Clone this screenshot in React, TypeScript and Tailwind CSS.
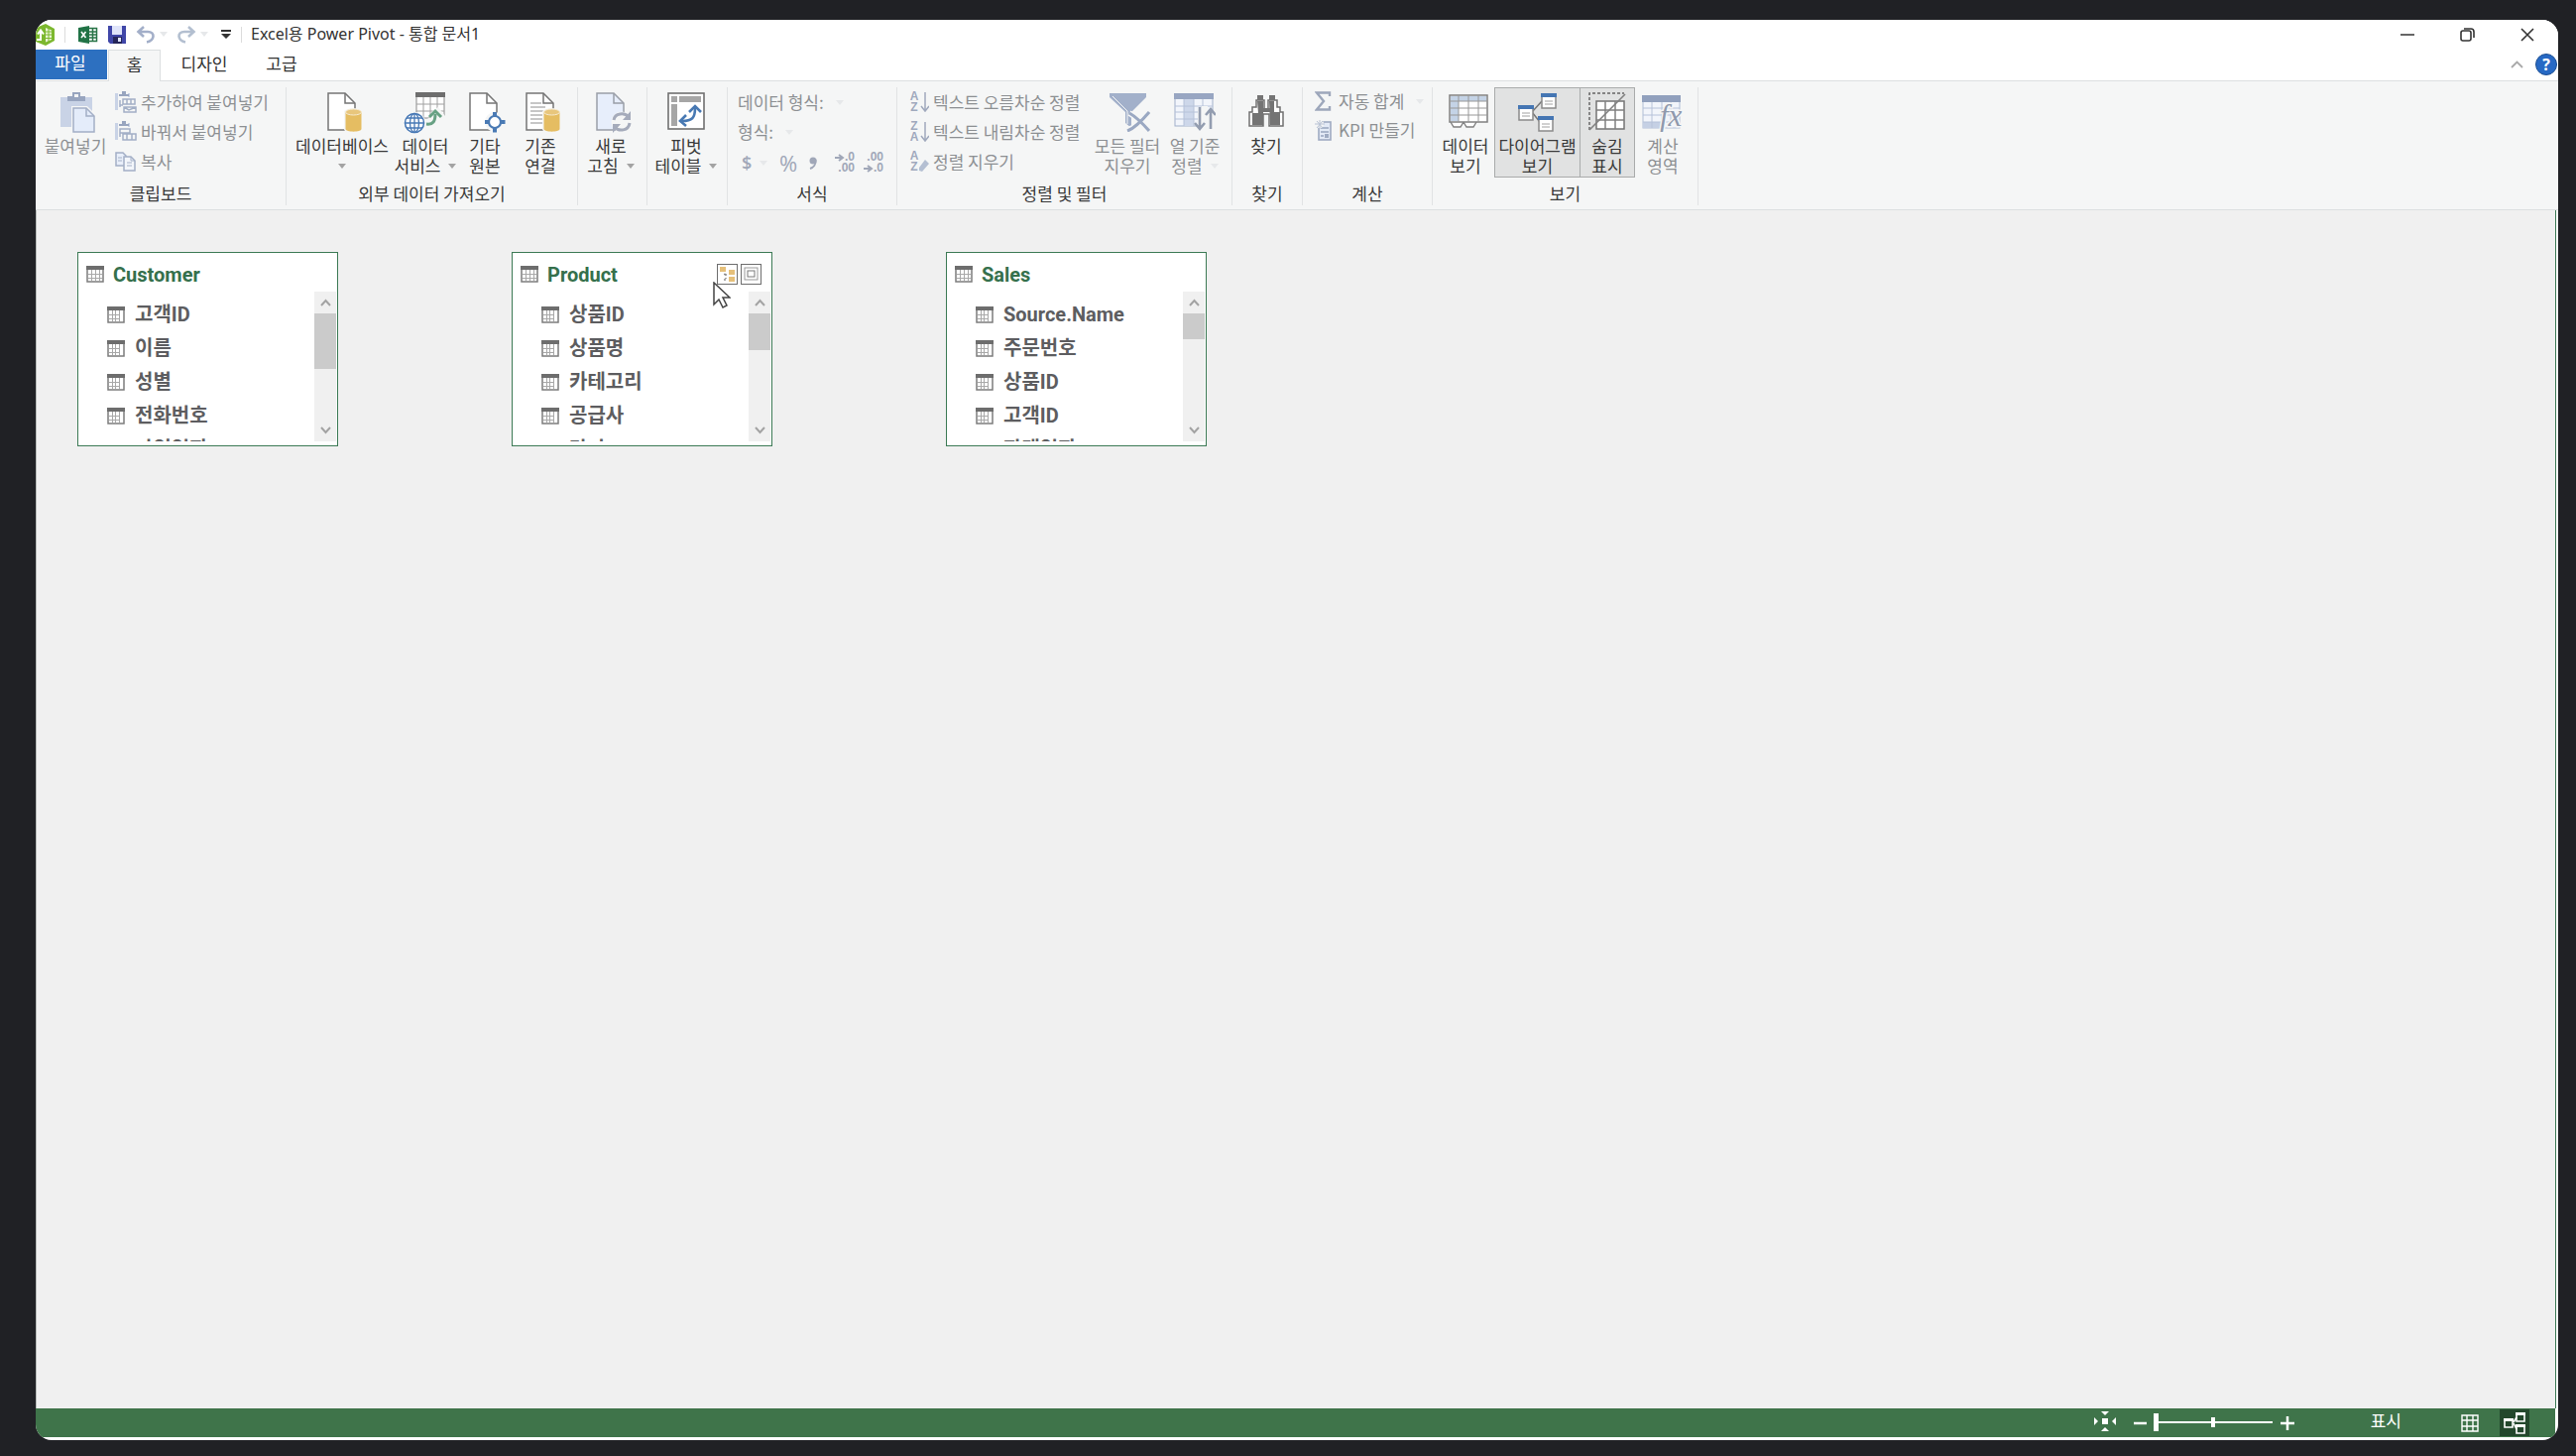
import React from 'react';
import clsx from 'clsx';

type IconProps = { w: number; h: number; children: React.ReactNode };

const Svg: React.FC<IconProps> = ({ w, h, children }) => (
  <svg width={w} height={h} viewBox={`0 0 ${w} ${h}`} fill="none" aria-hidden="true" className="shrink-0">
    {children}
  </svg>
);

/* Shared icon pieces */

const Page: React.FC<{ fill?: string; stroke?: string }> = ({ fill = '#fff', stroke = '#757575' }) => (
  <>
    <path d="M1 1H18L28 11V38H1Z" fill={fill} stroke={stroke} strokeWidth="1.5" />
    <path d="M18 1V11H28" stroke={stroke} strokeWidth="1.5" />
  </>
);

const Cylinder = () => (
  <>
    <path d="M17 20C17 15 36 15 36 20V37C36 42 17 42 17 37Z" fill="#f5f6f6" />
    <path d="M18.500 20V37C18.500 40.500 34.500 40.500 34.500 37V20Z" fill="#e5bd62" />
    <ellipse cx="26.500" cy="20" rx="8" ry="3" fill="#e8c67c" stroke="#f6ead0" />
  </>
);

/* Title bar icons */

const PivotLogo = () => (
  <Svg w={20} h={22}>
    <path d="M0 4L10 0L19 5V17L10 22L0 18Z" fill="#7cb82f" />
    <path d="M10 4L16 6.500V16L10 18.500Z" fill="#e9f5d6" />
    <path d="M10 11H17M13 4V18M10 8H17M10 14.500H17" stroke="#7cb82f" />
    <path d="M1 16H5V8M2 10.500L5 6.500L8 10.500" stroke="#fff" strokeWidth="2" />
  </Svg>
);

const ExcelLogo = () => (
  <Svg w={20} h={18}>
    <path d="M10 2.500H18.500V15.500H10" stroke="#2a7548" fill="#fff" strokeWidth="1.500" />
    <path d="M11 6H18M11 9H18M11 12H18M14.500 3V15" stroke="#2a7548" strokeWidth="1.500" />
    <path d="M0 2L11 0V18L0 16Z" fill="#217346" />
    <path d="M3 6L7.500 12M7.500 6L3 12" stroke="#fff" strokeWidth="1.600" />
  </Svg>
);

const SaveIcon = () => (
  <Svg w={20} h={18}>
    <path d="M1 0H19V18H3L1 16Z" fill="#4046a8" />
    <rect x="5" y="0" width="10" height="9" fill="#dfe4fa" />
    <rect x="6" y="11" width="9" height="7" fill="#25265a" />
    <rect x="11" y="12" width="3" height="4" fill="#dfe4fa" />
  </Svg>
);

const UndoIcon = () => (
  <Svg w={20} h={18}>
    <path d="M3 6H12C20 6 19 15 11 16.500M8 1L2.500 6L8 11" stroke="#a3afc9" strokeWidth="2.600" />
  </Svg>
);

const RedoIcon = () => (
  <Svg w={20} h={18}>
    <path d="M17 6H8C0 6 1 15 9 16.500M12 1L17.500 6L12 11" stroke="#b3bfd0" strokeWidth="2.600" />
  </Svg>
);

/* Ribbon icons */

const PasteIcon = () => (
  <Svg w={36} h={41}>
    <path d="M0 5H32V35H0Z" fill="#c9d3e6" />
    <path d="M7 4H12V0H20V4H25V9H7Z" fill="#98a5bf" />
    <rect x="14" y="2" width="4" height="3" fill="#f5f6f6" />
    <path d="M11 14H27L36 23V41H11Z" fill="#f5f6f6" />
    <path d="M13 16H26L34 24V40H13Z" fill="#e4ecfa" stroke="#a3afc6" strokeWidth="1.500" />
    <path d="M26 16V24H34" stroke="#a3afc6" strokeWidth="1.500" />
  </Svg>
);

const PasteSmallIcon: React.FC<{ replace?: boolean }> = ({ replace }) => (
  <Svg w={22} h={22}>
    <path d="M0 2H3V19H0ZM15 2H13V6H15Z" fill="#c9d3e6" />
    <path d="M4 5V3H7V0H11V3H14V5Z" fill="#98a5bf" />
    {replace ? (
      <path d="M5 8H15V12H5ZM5 12V16M8 13H21V19H8ZM12 13V19M17 13V19" stroke="#a3afc6" strokeWidth="1.500" />
    ) : (
      <path d="M8 8H20V13H8ZM12 8V13M16 8V13M5 14H8M9 16H21V21H9ZM9 16L14 19L21 16M5 9V16" stroke="#a3afc6" strokeWidth="1.500" />
    )}
  </Svg>
);

const CopyIcon = () => (
  <Svg w={22} h={20}>
    <path d="M1 1H8L11 4V14H1Z" fill="#e9effa" stroke="#a3afc6" strokeWidth="1.500" />
    <path d="M9 5H16L20 9V19H9Z" fill="#f3f6fb" stroke="#a3afc6" strokeWidth="1.500" />
    <path d="M3 6H7M3 9H7M12 11H17M12 14H17M16 5V9H20" stroke="#a3afc6" />
  </Svg>
);

const DatabaseIcon = () => (
  <Svg w={36} h={41}>
    <Page />
    <Cylinder />
  </Svg>
);

const DataServiceIcon = () => (
  <Svg w={44} h={42}>
    <rect x="13" y="1" width="28" height="25" fill="#fff" stroke="#8a8a8a" />
    <rect x="12" y="0" width="30" height="5" fill="#6e6e6e" />
    <path d="M13 12H41M13 19H41M20 5V26M27 5V26M34 5V26" stroke="#a0a0a0" />
    <path d="M0 31A11 11 0 1 1 22 31A11 11 0 1 1 0 31M22 38V28L29 24V19L35 15L42 24V27H38V31L32 38Z" fill="#f5f6f6" />
    <circle cx="11" cy="31" r="9.500" fill="#fff" stroke="#4778b5" strokeWidth="1.600" />
    <ellipse cx="11" cy="31" rx="4.500" ry="9.500" stroke="#4778b5" strokeWidth="1.300" />
    <path d="M2 31H20M3 26H19M3 36H19M11 21.500V40.500" stroke="#4778b5" strokeWidth="1.300" />
    <path d="M23 32C30 33 32 29 32 22" stroke="#68a184" strokeWidth="3" />
    <path d="M26 25L32 19L38 25" stroke="#68a184" strokeWidth="3" />
  </Svg>
);

const OtherSourceIcon = () => (
  <Svg w={37} h={41}>
    <Page />
    <circle cx="26" cy="30" r="10" fill="#f5f6f6" />
    <circle cx="26" cy="30" r="6" fill="#fff" stroke="#4a7ab4" strokeWidth="2.200" />
    <path d="M26 20V24M26 36V40.500M16 30H20M32 30H36.500" stroke="#4a7ab4" strokeWidth="4" />
  </Svg>
);

const ExistingIcon = () => (
  <Svg w={36} h={41}>
    <Page />
    <path d="M5 11H16M5 15H20M5 19H18M5 23H17M5 27H17M5 31H17" stroke="#8e8e8e" />
    <Cylinder />
  </Svg>
);

const RefreshIcon = () => (
  <Svg w={36} h={41}>
    <Page fill="#e7eefb" stroke="#9a9fa8" />
    <circle cx="26" cy="30" r="10.500" fill="#f5f6f6" />
    <path d="M18 28C19 21 29 20 33 25M34 31C33 39 23 40 19 35" stroke="#a5abbb" strokeWidth="3" />
    <path d="M35 19V28H27ZM17 41V32H25Z" fill="#a5abbb" />
  </Svg>
);

const PivotTableIcon = () => (
  <Svg w={38} h={41}>
    <rect x="1" y="1" width="36" height="36" fill="#fff" stroke="#707070" strokeWidth="1.600" />
    <path d="M4 4H10V10H4ZM12 4H34V10H12ZM4 12H10V34H4Z" fill="#a6a6a6" />
    <path d="M15 29C25 29 28 26 28 16" stroke="#4879b3" strokeWidth="2.600" />
    <path d="M22 20L28 14L34 20M19 23L13 29L19 34" stroke="#4879b3" strokeWidth="2.600" />
  </Svg>
);

const SortIcon: React.FC<{ top: string; bottom?: string }> = ({ top, bottom }) => (
  <span className="flex h-[22px] w-5 shrink-0 items-center text-[#a0a9bd]">
    <span className="flex w-[10px] flex-col text-center font-['Liberation_Sans'] text-[12px] font-bold leading-[11px]">
      <span>{top}</span>
      <span>{bottom ?? 'Z'}</span>
    </span>
    {bottom ? (
      <Svg w={10} h={22}>
        <path d="M6 1V19M2 15L6 20L10 15" stroke="#a0a9bd" strokeWidth="1.500" />
      </Svg>
    ) : (
      <Svg w={10} h={22}>
        <path d="M0 17L6 9L10 13L3 21L0 20Z" fill="#b4bfd2" />
      </Svg>
    )}
  </span>
);

const ClearFilterIcon = () => (
  <Svg w={41} h={40}>
    <path d="M0 1H37V5L22 20V36L16 31V20L0 5Z" fill="#a2b0ca" />
    <path d="M3 4L18 19V32" stroke="#f5f6f6" />
    <path d="M19 38C26 36 34 27 39 20M20 21C27 25 33 31 39 38" stroke="#f5f6f6" strokeWidth="6" />
    <path d="M18 39C26 36 34 27 40 20M20 21C27 25 33 31 40 39" stroke="#9aa8c2" strokeWidth="3" />
  </Svg>
);

const SortByColumnIcon = () => (
  <Svg w={42} h={40}>
    <rect x="1" y="2" width="38" height="32" fill="#f2f5fb" stroke="#a2b0ca" />
    <rect x="0" y="1" width="40" height="6" fill="#98a6c2" />
    <rect x="10" y="7" width="10" height="27" fill="#cdd7ea" />
    <path d="M1 14H39M1 20H39M1 27H39M10 7V34M20 7V34M29 7V34" stroke="#b6c2d9" />
    <path d="M24 17H28V14H34V20H42V40H24Z" fill="#f5f6f6" />
    <path d="M26 15V35M21 31L26 37L31 31M37 37V18M32 23L37 17L42 23" stroke="#939db0" strokeWidth="2.600" />
  </Svg>
);

const FindIcon = () => (
  <Svg w={36} h={40}>
    <path d="M8 8H16V18H20V8H29V15H32V20H35V34H21V22H15V34H1V20H4V15H8Z" fill="#fff" stroke="#707070" strokeWidth="1.500" />
    <path d="M9 9H15V33H4V21H10ZM21 9H26V20H32V33H22Z" fill="#747474" />
    <path d="M9 3H15V8H9ZM21 3H27V8H21ZM14 16H22V20H14Z" fill="#747474" />
  </Svg>
);

const SigmaIcon = () => (
  <Svg w={17} h={20}>
    <path d="M15 5V1.500H2L9 10L2 18.500H15V15" stroke="#9da7bb" strokeWidth="2.400" />
  </Svg>
);

const KpiIcon = () => (
  <Svg w={17} h={21}>
    <rect x="4" y="2" width="12" height="18" fill="#e3eaf6" stroke="#9fabc2" strokeWidth="1.600" />
    <path d="M6 8H14M6 12H14M6 16H9" stroke="#aab6cc" strokeWidth="2" />
    <rect x="10" y="14" width="4" height="4" fill="#9fabc2" />
    <circle cx="5" cy="4" r="4" fill="#f5f6f6" />
    <path d="M5 0V9M0 4H10M2 1L8 8M8 1L2 8" stroke="#b8c2d4" />
  </Svg>
);

const DataViewIcon = () => (
  <Svg w={40} h={40}>
    <path d="M2 30L5 35H12L15 30M15 30L18 35H25L28 30" fill="#fff" stroke="#808080" strokeWidth="1.400" />
    <rect x="1" y="3" width="38" height="27" fill="#fff" stroke="#808080" strokeWidth="1.500" />
    <path d="M2 4H38V9H2ZM2 9H10V29H2Z" fill="#c4d3e6" />
    <path d="M1 9H39M1 16H39M1 23H39M10 3V30M20 3V30M30 3V30" stroke="#979797" />
  </Svg>
);

const DiagramNode: React.FC<{ x: number; y: number }> = ({ x, y }) => (
  <>
    <rect x={x + 1} y={y + 1} width="14" height="14" fill="#fff" stroke="#8a8a8a" strokeWidth="1.500" />
    <rect x={x} y={y} width="16" height="4" fill="#4576b3" />
    <path d={`M${x + 4} ${y + 8}H${x + 12}M${x + 4} ${y + 11}H${x + 12}`} stroke="#a2a2a2" />
  </>
);

const DiagramIcon = () => (
  <Svg w={39} h={41}>
    <path d="M14 20L24 9M14 20L22 30" stroke="#777" strokeWidth="1.500" />
    <DiagramNode x={23} y={1} />
    <DiagramNode x={0} y={13} />
    <DiagramNode x={20} y={24} />
  </Svg>
);

const HiddenIcon = () => (
  <Svg w={38} h={40}>
    <path d="M1 38V1H36" stroke="#666" strokeWidth="1.500" strokeDasharray="3 2" />
    <rect x="8" y="9" width="28" height="28" fill="#fff" stroke="#747474" strokeWidth="1.500" />
    <path d="M8 18H36M8 28H36M17 9V37M27 9V37" stroke="#808080" strokeWidth="1.500" />
    <path d="M1 38L37 2" stroke="#808080" strokeWidth="1.600" />
  </Svg>
);

const CalcAreaIcon = () => (
  <Svg w={42} h={40}>
    <rect x="1" y="4" width="37" height="32" fill="#f2f5fb" stroke="#b0bdd6" />
    <rect x="0" y="3" width="39" height="7" fill="#91a0bd" />
    <path d="M1 30H20V36H1Z" fill="#c5d0e4" />
    <path d="M1 16H38M1 23H38M1 30H38M10 10V36M20 10V36M29 10V36" stroke="#b6c2d9" />
    <text x="18" y="34" fontSize="31" fontStyle="italic" fontFamily="Liberation Serif, serif" fill="#8f99ad" stroke="#f5f6f6" strokeWidth="3" paintOrder="stroke">fx</text>
  </Svg>
);

const TableIcon: React.FC<{ column?: boolean }> = ({ column }) => (
  <Svg w={18} h={17}>
    <rect x="1" y="1" width="16" height="15" fill="#fff" stroke="#7c7c7c" strokeWidth="1.500" />
    <rect x="0" y="0" width="18" height="4" fill="#6d6d6d" />
    {column ? (
      <path d="M2 8.500H12M2 12.500H12M5.500 4V15M8.500 4V15M12.500 4V15" stroke="#a8a8a8" />
    ) : (
      <path d="M2 8.500H16M2 12.500H16M5.500 4V15M9.500 4V15M13.500 4V15" stroke="#a8a8a8" />
    )}
  </Svg>
);

const Caret: React.FC<{ faint?: boolean }> = ({ faint }) => (
  <Svg w={8} h={5}>
    <path d="M0 0H8L4 5Z" fill={faint ? '#e6e8ea' : '#a3a3a3'} />
  </Svg>
);

/* Ribbon building blocks */

interface BigButtonProps {
  icon: React.ReactNode;
  lines: string[];
  width: string;
  menu?: 'inline' | 'below' | 'faint';
  indent?: boolean;
  disabled?: boolean;
  pressed?: boolean;
}

const BigButton: React.FC<BigButtonProps> = ({ icon, lines, width, menu, indent, disabled, pressed }) => (
  <button
    type="button"
    disabled={disabled}
    aria-pressed={pressed}
    className={clsx(
      'flex h-[91px] shrink-0 flex-col items-center border pt-1',
      width,
      disabled ? 'text-[#8d9093]' : 'text-[#3a3a3a]',
      pressed ? 'border-[#a9abab] bg-[#e1e2e2]' : 'border-transparent'
    )}
  >
    <span className={clsx('flex h-[44px] items-start', indent && 'pl-[5px]')}>{icon}</span>
    {lines.map((line, i) => (
      <span key={line} className="flex items-center gap-2 whitespace-nowrap leading-5">
        {line}
        {i === lines.length - 1 && (menu === 'inline' || menu === 'faint') && <Caret faint={menu === 'faint'} />}
      </span>
    ))}
    {menu === 'below' && <span className="flex h-5 items-center"><Caret /></span>}
  </button>
);

interface SmallButtonProps {
  icon?: React.ReactNode;
  label: string;
  menu?: boolean;
  compact?: boolean;
}

const SmallButton: React.FC<SmallButtonProps> = ({ icon, label, menu, compact }) => (
  <button
    type="button"
    disabled
    className={clsx('flex items-center gap-1 whitespace-nowrap text-[#8d9093]', compact ? 'h-7' : 'h-[30px]')}
  >
    {icon}
    {label}
    {menu && <span className="pl-2"><Caret faint /></span>}
  </button>
);

const Group: React.FC<{ label?: string; width: string; children: React.ReactNode }> = ({ label, width, children }) => (
  <section aria-label={label} className={clsx('flex shrink-0 flex-col border-r border-[#e1e3e4]', width)}>
    <div className="flex h-[95px]">{children}</div>
    <div className="text-center leading-6 text-[#3a3a3a]">{label}</div>
  </section>
);

const DecimalArrow = () => (
  <Svg w={10} h={8}>
    <path d="M0 4H8M4 1L8 4L4 7" stroke="#a0a7b8" strokeWidth="2" />
  </Svg>
);

const TitleBar = () => (
  <header className="flex h-[30px] shrink-0 items-center bg-white pb-px">
    <PivotLogo />
    <span className="ml-[9px] h-4 w-px bg-[#dcdcdc]" />
    <div className="ml-[13px] flex items-center gap-[9px]">
      <ExcelLogo />
      <button type="button" aria-label="저장"><SaveIcon /></button>
      <button type="button" aria-label="실행 취소" className="flex items-center gap-1"><UndoIcon /><Caret faint /></button>
      <button type="button" aria-label="다시 실행" className="flex items-center gap-1"><RedoIcon /><Caret faint /></button>
      <button type="button" aria-label="빠른 실행 도구 모음 사용자 지정" className="ml-1">
        <Svg w={10} h={10}>
          <path d="M0 0H10V2H0ZM0 4H10L5 9Z" fill="#333" />
        </Svg>
      </button>
    </div>
    <span className="ml-[10px] h-4 w-px bg-[#dcdcdc]" />
    <h1 className="ml-[9px] whitespace-nowrap pb-[2px] font-['Noto_Sans','Noto_Sans_CJK_KR',sans-serif] text-[16px] leading-5 text-[#333]">
      Excel용 Power Pivot - 통합 문서1
    </h1>
    <div className="ml-auto flex items-center gap-[46px] pr-6">
      <button type="button" aria-label="최소화">
        <Svg w={14} h={14}><path d="M0 7H14" stroke="#333" strokeWidth="1.600" /></Svg>
      </button>
      <button type="button" aria-label="이전 크기로 복원">
        <Svg w={15} h={14}>
          <rect x="1" y="3" width="10" height="10" rx="2" stroke="#333" strokeWidth="1.600" />
          <path d="M4 1H11Q14 1 14 4V10" stroke="#333" strokeWidth="1.600" />
        </Svg>
      </button>
      <button type="button" aria-label="닫기">
        <Svg w={14} h={14}><path d="M1 1L13 13M13 1L1 13" stroke="#333" strokeWidth="1.600" /></Svg>
      </button>
    </div>
  </header>
);

const Tabs = () => (
  <nav className="flex h-8 shrink-0 border-b border-[#dcdfe0] bg-white text-[#333]">
    <button type="button" className="h-[30px] w-[72px] bg-[#2d70c0] pb-1 pr-[2px] text-white">파일</button>
    <button type="button" aria-current="page" className="-mb-px ml-px w-[53px] border-x border-t border-[#dcdfe0] bg-[#f5f6f6] pb-1">홈</button>
    <button type="button" className="w-[88px] pb-1">디자인</button>
    <button type="button" className="w-[68px] pb-1">고급</button>
    <div className="ml-auto flex items-center gap-3 pb-px pr-px">
      <button type="button" aria-label="리본 메뉴 축소">
        <Svg w={13} h={8}><path d="M1 7L6.500 1.500L12 7" stroke="#a8a8a8" strokeWidth="1.800" /></Svg>
      </button>
      <button
        type="button"
        aria-label="도움말"
        className="flex size-[22px] items-center justify-center rounded-full border border-[#1d4f92] bg-[#2769c4] font-['Open_Sans',sans-serif] text-[16px] font-bold leading-none text-white"
      >
        ?
      </button>
    </div>
  </nav>
);

const Ribbon = () => (
  <div className="flex h-[130px] shrink-0 border-b border-[#dcdfe0] bg-[#f5f6f6] pb-1 pt-[6px]">
    <Group label="클립보드" width="w-[253px]">
      <BigButton icon={<PasteIcon />} lines={['붙여넣기']} width="ml-1 w-[72px]" indent disabled />
      <div className="ml-1 flex flex-col">
        <SmallButton icon={<PasteSmallIcon />} label="추가하여 붙여넣기" />
        <SmallButton icon={<PasteSmallIcon replace />} label="바꿔서 붙여넣기" />
        <SmallButton icon={<CopyIcon />} label="복사" />
      </div>
    </Group>
    <Group label="외부 데이터 가져오기" width="w-[294px]">
      <BigButton icon={<DatabaseIcon />} lines={['데이터베이스']} width="ml-1 w-[104px]" menu="below" indent />
      <BigButton icon={<DataServiceIcon />} lines={['데이터', '서비스']} width="w-[64px]" menu="inline" />
      <BigButton icon={<OtherSourceIcon />} lines={['기타', '원본']} width="w-[56px]" indent />
      <BigButton icon={<ExistingIcon />} lines={['기존', '연결']} width="w-[56px]" indent />
    </Group>
    <Group width="w-[70px]">
      <BigButton icon={<RefreshIcon />} lines={['새로', '고침']} width="w-[66px]" menu="inline" indent />
    </Group>
    <Group width="w-[81px]">
      <BigButton icon={<PivotTableIcon />} lines={['피벗', '테이블']} width="w-[78px]" menu="inline" />
    </Group>
    <Group label="서식" width="w-[171px]">
      <div className="flex flex-col pl-[10px]">
        <SmallButton label="데이터 형식:" menu />
        <SmallButton label="형식:" menu />
        <div className="flex h-8 items-center text-[#a0a7b8]">
          <button type="button" disabled className="flex w-[38px] items-center gap-2 pl-1 font-['Open_Sans',sans-serif] text-[18px] font-semibold">$<Caret faint /></button>
          <button type="button" disabled className="w-[26px] font-['Open_Sans',sans-serif] text-[22px] leading-none">%</button>
          <button type="button" disabled aria-label="쉼표 스타일" className="w-6 pl-2">
            <Svg w={10} h={13}>
              <circle cx="4" cy="4" r="3.500" fill="#a0a7b8" />
              <path d="M6.500 3C7.500 8 4 11 1 12" stroke="#a0a7b8" strokeWidth="2" />
            </Svg>
          </button>
          <button type="button" disabled className="ml-[10px] flex flex-col items-end font-['Liberation_Sans',sans-serif] text-[12px] font-bold leading-[11px]">
            <span className="flex items-center"><DecimalArrow />.0</span>
            <span>.00</span>
          </button>
          <button type="button" disabled className="ml-[9px] flex flex-col items-end font-['Liberation_Sans',sans-serif] text-[12px] font-bold leading-[11px]">
            <span>.00</span>
            <span className="flex items-center"><DecimalArrow />.0</span>
          </button>
        </div>
      </div>
    </Group>
    <Group label="정렬 및 필터" width="w-[338px]">
      <div className="flex flex-col pl-3">
        <SmallButton icon={<SortIcon top="A" bottom="Z" />} label="텍스트 오름차순 정렬" />
        <SmallButton icon={<SortIcon top="Z" bottom="A" />} label="텍스트 내림차순 정렬" />
        <SmallButton icon={<SortIcon top="A" />} label="정렬 지우기" />
      </div>
      <div className="ml-auto flex pr-[6px]">
        <BigButton icon={<ClearFilterIcon />} lines={['모든 필터', '지우기']} width="w-[74px]" indent disabled />
        <BigButton icon={<SortByColumnIcon />} lines={['열 기준', '정렬']} width="w-[62px]" menu="faint" disabled />
      </div>
    </Group>
    <Group label="찾기" width="w-[71px]">
      <BigButton icon={<FindIcon />} lines={['찾기']} width="w-[68px]" />
    </Group>
    <Group label="계산" width="w-[131px]">
      <div className="flex flex-col pl-3">
        <SmallButton icon={<span className="w-5"><SigmaIcon /></span>} label="자동 합계" menu compact />
        <SmallButton icon={<span className="w-5"><KpiIcon /></span>} label="KPI 만들기" />
      </div>
    </Group>
    <Group label="보기" width="w-[268px]">
      <BigButton icon={<DataViewIcon />} lines={['데이터', '보기']} width="ml-1 w-[58px]" indent />
      <BigButton icon={<DiagramIcon />} lines={['다이어그램', '보기']} width="w-[87px]" pressed />
      <BigButton icon={<HiddenIcon />} lines={['숨김', '표시']} width="-ml-px w-[56px]" pressed />
      <BigButton icon={<CalcAreaIcon />} lines={['계산', '영역']} width="w-[56px]" disabled />
    </Group>
  </div>
);

/* Diagram */

interface ModelTable {
  name: string;
  fields: string[];
  thumb: string;
  active?: boolean;
}

const TABLES: ModelTable[] = [
  { name: 'Customer', fields: ['고객ID', '이름', '성별', '전화번호', '가입일자'], thumb: 'h-14' },
  { name: 'Product', fields: ['상품ID', '상품명', '카테고리', '공급사', '단가'], thumb: 'h-[37px]', active: true },
  { name: 'Sales', fields: ['Source.Name', '주문번호', '상품ID', '고객ID', '판매일자'], thumb: 'h-[26px]' },
];

const Cursor = () => (
  <svg width="18" height="27" viewBox="0 0 18 27" fill="none" aria-hidden="true" className="absolute -bottom-6 -left-1 z-10">
    <path d="M1 1V23L6 18L10 26L14 24L10 16H17Z" fill="#fff" stroke="#444" strokeWidth="1.500" />
  </svg>
);

const TableCard: React.FC<{ table: ModelTable }> = ({ table }) => (
  <article className="flex h-[196px] w-[263px] shrink-0 flex-col border border-[#3c7a55] bg-white pb-1 font-['Roboto','Noto_Sans_CJK_KR',sans-serif] text-[20px] font-bold">
    <div className="flex h-[39px] items-center pl-2 pr-[10px] pt-1">
      <TableIcon />
      <h2 className="pl-[9px] leading-6 text-[#35704c]">{table.name}</h2>
      {table.active && (
        <div className="relative ml-auto flex gap-[3px]">
          <button type="button" aria-label="계층 구조 만들기" className="border border-[#6e6e6e] bg-white">
            <Svg w={19} h={19}>
              <path d="M2 2H8V7H2ZM11 5H17V10H11ZM11 12H17V17H11Z" fill="#e6c07a" />
              <path d="M8 9V14M6 15H10M6 9.500H10" stroke="#8a8a8a" strokeWidth="1.500" strokeDasharray="2 2" />
            </Svg>
          </button>
          <button type="button" aria-label="최대화" className="border border-[#6e6e6e] bg-white">
            <Svg w={19} h={19}>
              <rect x="3" y="3" width="13" height="12" stroke="#9a9a9a" />
              <rect x="6" y="6" width="7" height="6" stroke="#7a7a7a" />
            </Svg>
          </button>
          <Cursor />
        </div>
      )}
    </div>
    <div className="flex min-h-0 flex-1 pr-px">
      <ul className="min-w-0 flex-1 overflow-hidden pl-[29px] pt-[6px]">
        {table.fields.map((field) => (
          <li key={field} className="flex h-[34px] items-center gap-[10px] whitespace-nowrap leading-6 text-[#5d5d60]">
            <TableIcon column />
            {field}
          </li>
        ))}
      </ul>
      <div className="flex w-[22px] flex-col bg-[#f0f0f0]">
        <button type="button" aria-label="위로" className="flex h-[22px] shrink-0 items-center justify-center">
          <Svg w={11} h={8}><path d="M1 7L5.500 2L10 7" stroke="#a3a3a3" strokeWidth="2" /></Svg>
        </button>
        <div className={clsx('shrink-0 bg-[#cbcbcb]', table.thumb)} />
        <button type="button" aria-label="아래로" className="mt-auto flex h-[22px] shrink-0 items-center justify-center">
          <Svg w={11} h={8}><path d="M1 1L5.500 6L10 1" stroke="#a3a3a3" strokeWidth="2" /></Svg>
        </button>
      </div>
    </div>
  </article>
);

const StatusBar = () => (
  <footer className="mr-[3px] flex h-[29px] shrink-0 items-center justify-end bg-[#3f744a] pr-[26px] text-white">
    <button type="button" aria-label="화면에 맞춤" className="pb-1">
      <Svg w={22} h={20}>
        <path d="M8 7H14V13H8ZM7 0H15L11 4ZM7 20H15L11 16ZM0 6V14L4 10ZM22 6V14L18 10Z" fill="#fff" />
      </Svg>
    </button>
    <button type="button" aria-label="축소" className="ml-[18px]">
      <Svg w={13} h={14}><path d="M0 7H13" stroke="#fff" strokeWidth="2.500" /></Svg>
    </button>
    <div className="relative ml-[7px] flex items-center pb-[2px]">
      <input
        type="range"
        min={0}
        max={100}
        defaultValue={0}
        aria-label="확대/축소"
        className="h-[19px] w-[120px] appearance-none bg-transparent [&::-webkit-slider-runnable-track]:h-[2px] [&::-webkit-slider-runnable-track]:bg-white [&::-webkit-slider-thumb]:-mt-2 [&::-webkit-slider-thumb]:h-[18px] [&::-webkit-slider-thumb]:w-[5px] [&::-webkit-slider-thumb]:appearance-none [&::-webkit-slider-thumb]:bg-white"
      />
      <span className="pointer-events-none absolute left-[58px] h-[10px] w-1 bg-white" />
    </div>
    <button type="button" aria-label="확대" className="ml-2">
      <Svg w={14} h={14}><path d="M0 7H14M7 0V14" stroke="#fff" strokeWidth="2.500" /></Svg>
    </button>
    <span className="ml-[77px] whitespace-nowrap pb-[6px] leading-5">표시</span>
    <button type="button" aria-label="데이터 보기" className="ml-[60px]">
      <Svg w={18} h={18}>
        <path d="M1 1H17V17H1ZM1 6H17M1 12H17M6 1V17M12 1V17" stroke="#fff" strokeWidth="1.400" />
      </Svg>
    </button>
    <button type="button" aria-label="다이어그램 보기" aria-pressed="true" className="ml-[21px] flex h-[27px] w-[30px] items-center justify-center bg-[#23472c]">
      <Svg w={22} h={22}>
        <path d="M10 10L13 5M10 11L13 17" stroke="#fff" strokeWidth="1.500" />
        <path d="M13 1H21V9H13ZM13 13H21V21H13ZM1 7H9V15H1Z" stroke="#fff" strokeWidth="1.600" />
        <path d="M12 0H22V3H12ZM12 12H22V15H12ZM0 6H10V9H0Z" fill="#fff" />
      </Svg>
    </button>
  </footer>
);

const App = () => (
  <div className="flex min-h-screen bg-[#202125] pb-4 pl-9 pr-[18px] pt-5 font-['Noto_Sans_CJK_KR',sans-serif] text-[17px]">
    <div className="flex min-w-0 flex-1 flex-col overflow-hidden rounded-2xl bg-white pb-[3px]">
      <TitleBar />
      <Tabs />
      <Ribbon />
      <main className="mr-[2px] flex flex-1 items-start gap-[175px] border-l border-r border-l-[#b9bdbb] border-r-[#3c7a55] bg-[#f0f0f0] pl-[41px] pt-[42px]">
        {TABLES.map((table) => (
          <TableCard key={table.name} table={table} />
        ))}
      </main>
      <StatusBar />
    </div>
  </div>
);

export default App;
